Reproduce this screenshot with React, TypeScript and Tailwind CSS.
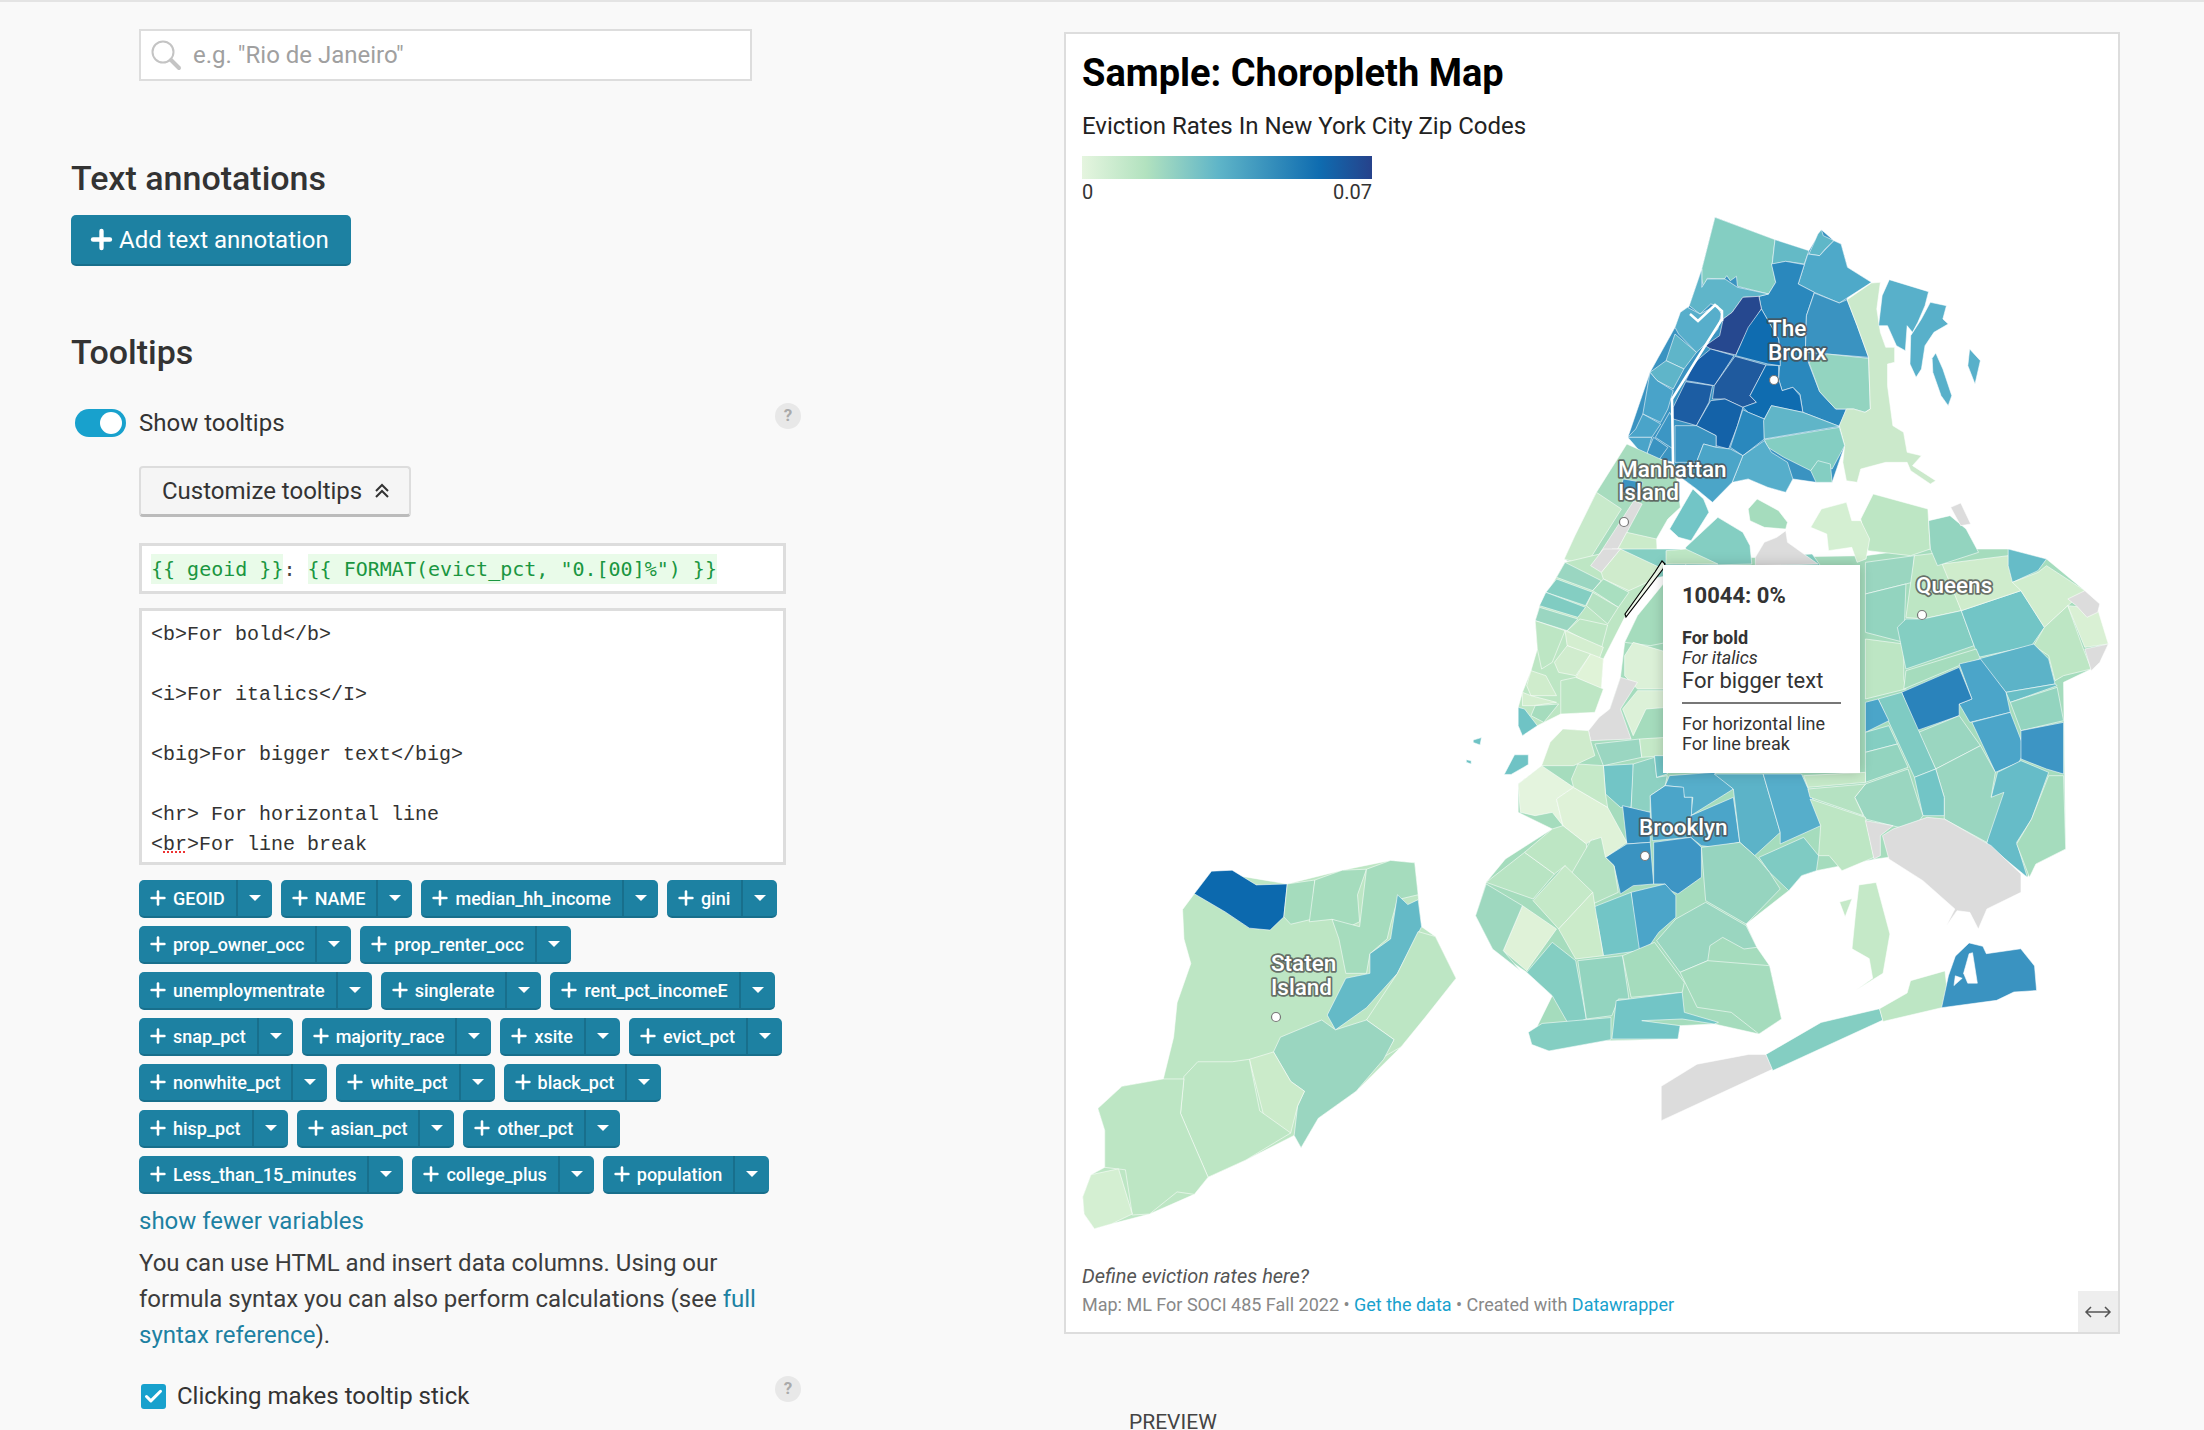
import React from "react";
import { Plus, Check } from "lucide-react";

type R = [string, string];

const top: R[] = [
  ["#3a93c1", "425,210 462,55 630,122 725,155 760,92 795,125 815,135 833,205 832,302 892,475 897,630 810,682 825,740 790,850 745,850 680,840 660,880 610,865 555,840 510,850 455,910 410,870 360,830 345,790 270,770 218,715 280,520 350,385 390,320"],
  ["#84cec2", "462,55 630,122 622,197 632,250 612,285 525,262 522,232 505,245 495,230 488,240 440,238 430,268 425,240 425,210"],
  ["#64bac6", "630,122 725,155 712,195 660,187 622,197"],
  ["#5fb7c8", "725,165 740,130 750,105 760,92 765,110 795,125 770,150 755,170"],
  ["#4ea9c9", "755,170 795,125 815,135 833,205 900,250 810,312 740,280 695,255 722,165"],
  ["#2a88bd", "620,195 660,187 712,197 695,255 740,280 718,350 715,460 725,495 755,578 800,630 830,630 810,682 708,640 700,585 680,565 650,575 640,540 645,480 640,420 592,330 585,292 612,285 632,250"],
  ["#3a93c1", "740,282 810,312 832,302 860,380 892,475 775,465 715,460 718,350"],
  ["#93d4c0", "725,490 775,465 892,478 897,630 882,640 850,630 830,630 800,630 755,578"],
  ["#cbe9cb", "832,302 900,252 925,250 915,330 925,400 940,445 965,445 965,490 945,495 945,560 960,680 990,700 1000,760 1040,770 1015,800 1080,845 1065,855 1010,815 1000,790 940,790 870,810 860,850 830,845 820,790 825,740 810,680 830,630 850,630 882,640 897,630 892,475 860,380"],
  ["#58b0ca", "950,242 1060,278 1050,320 1030,370 1015,400 1000,380 995,455 970,440 945,380 920,380 930,290"],
  ["#58b0ca", "1065,310 1110,320 1100,360 1115,375 1075,400 1050,440 1040,510 1025,535 1008,495 1010,410 1040,360"],
  ["#58b0ca", "1080,462 1100,510 1125,590 1115,620 1095,590 1072,520 1070,478"],
  ["#58b0ca", "1175,450 1205,485 1190,555 1170,500"],
  ["#5fb5c9", "425,210 425,265 440,240 490,240 525,265 612,285 585,292 540,295 510,340 485,360 470,320 450,315 420,345 390,320"],
  ["#26488f", "540,295 585,292 592,330 555,390 520,468 450,450 435,440 475,410 485,360 510,340"],
  ["#0f6cb0", "592,330 640,420 645,500 610,495 520,470 555,385"],
  ["#175ca6", "450,450 515,470 460,560 410,550 380,545 405,490"],
  ["#1f5a9e", "518,472 605,498 560,590 578,610 540,625 490,600 455,600 460,560"],
  ["#0f6cb0", "605,498 640,500 640,540 650,575 680,565 700,590 708,640 620,620 600,660 555,640 540,625 578,610 560,590"],
  ["#1c5da3", "380,548 455,560 445,610 410,680 395,675 345,660 345,625"],
  ["#1462a8", "450,605 490,600 540,625 525,680 500,750 465,740 465,710 410,680"],
  ["#2a88bd", "540,632 555,640 600,660 600,720 540,770 505,745 525,680"],
  ["#60b5c8", "620,620 708,640 810,682 600,720 598,665"],
  ["#84cec2", "600,722 810,685 825,740 790,810 750,790 730,815 655,775 610,745"],
  ["#84cec2", "730,815 750,785 785,795 790,850 745,850"],
  ["#56aecb", "600,725 620,760 665,790 680,840 660,880 610,865 555,840 510,850 540,770"],
  ["#3a93c1", "350,680 410,680 465,710 465,745 430,735 410,790 350,790"],
  ["#4ba5c8", "430,735 465,745 505,750 540,770 510,850 455,910 410,870 360,830 410,790"],
  ["#57aecb", "385,325 420,345 465,320 480,345 470,390 440,430 410,460 360,405 350,385 365,340"],
  ["#5fb5c9", "350,405 410,460 375,510 325,485"],
  ["#5fb5c9", "325,485 375,510 345,570 300,545 280,520"],
  ["#49a3c9", "280,520 300,545 345,575 330,630 310,670 260,645"],
  ["#4aa4c9", "260,645 310,675 285,715 218,715 240,690"],
  ["#3c96c4", "335,640 345,660 345,750 295,715"],
  ["#3a93c1", "290,715 330,745 300,790 270,765"],
  ["#4aa4c9", "218,715 285,715 270,770 250,755"],
  ["#a7dcbe", "215,735 350,800 365,925 330,960 298,1020 300,1060 240,1150 140,1150 40,1080 70,1010 130,880"],
  ["#c8eacb", "130,880 200,930 100,1100 40,1080 70,1010"],
  ["#3a93c1", "205,840 260,850 250,880 195,880"],
  ["#dcdcdc", "235,905 258,915 140,1150 105,1120"],
  ["#cbebca", "215,1000 298,1020 300,1060 250,1120 185,1060"],
  ["#72c5c6", "335,990 400,870 430,900 445,940 395,1025 360,1015"],
  ["#a5dcbd", "555,930 580,900 640,935 665,970 660,990 600,985 560,965"],
];

const mid: R[] = [
  ["#bde6c4", "270,40 400,0 500,60 410,205 360,330 355,420 340,490 260,495 205,530 170,560 160,475 170,430 190,365 205,300 200,215 210,170"],
  ["#a5dcbd", "60,1100 85,1000 130,930 240,840 160,790 160,705 215,650 265,540 325,545 375,480 400,385 410,280 440,200 505,100 500,30 975,20 1090,0 1310,0 1400,30 1490,125 1545,285 1505,360 1440,400 1445,900 1375,945 1355,985 1260,885 1000,930 860,965 825,980 795,1025 695,1125 720,1195 750,1250 778,1410 725,1455 620,1425 540,1430 535,1470 380,1475 190,1470 240,1340 180,1270 100,1200"],
  ["#84cec2", "380,0 470,0 540,0 560,40 565,60 510,80 470,90 395,70"],
  ["#cfebcc", "400,0 500,60 480,90 420,125 360,90 355,70"],
  ["#dcdcdc", "330,50 360,0 400,0 355,70"],
  ["#9ad6c1", "270,40 355,95 335,125 250,85"],
  ["#84cec2", "250,90 335,130 318,170 225,130"],
  ["#80ccc2", "225,130 318,175 300,205 210,170"],
  ["#9ad6c1", "210,175 300,210 275,245 200,215"],
  ["#a9dfc0", "360,90 420,130 395,175 335,125"],
  ["#b5e2c2", "335,130 395,175 370,225 320,170"],
  ["#bde6c4", "305,210 370,228 355,300 275,245"],
  ["#bde6c4", "200,215 270,245 240,340 215,360 205,300"],
  ["#d4eed0", "270,245 360,295 350,330 275,290"],
  ["#d0ecce", "245,340 275,290 330,315 295,380 255,370"],
  ["#e0f3d8", "330,315 360,330 355,420 295,385"],
  ["#cfeccc", "190,365 225,380 250,440 190,440 180,410"],
  ["#bde6c4", "260,395 295,385 360,420 340,490 260,495"],
  ["#a5dcbd", "200,470 255,465 220,520 190,500"],
  ["#d4eed0", "170,430 190,440 250,460 195,470 170,470"],
  ["#6fc3c5", "160,475 175,480 205,530 170,560 160,530"],
  ["#a5dcbd", "410,280 440,200 510,90 510,280 470,290"],
  ["#dcf1d8", "410,320 430,280 510,310 510,420 440,420 410,380"],
  ["#dcdcdc", "400,385 440,400 400,480 425,570 330,575 325,545 350,505 375,480"],
  ["#dcf1d8", "440,425 510,425 510,475 460,480 430,560 405,480"],
  ["#cfebcc", "265,540 325,545 330,575 340,620 290,650 215,650 235,580"],
  ["#9ad6c1", "340,585 445,570 450,625 360,650"],
  ["#c5e9c8", "445,570 510,565 510,620 450,625"],
  ["#72c5c6", "360,650 430,645 430,680 425,775 400,775 365,735"],
  ["#8dd1c2", "430,645 480,625 485,685 510,680 505,710 470,740 470,790 425,780"],
  ["#72c5c6", "480,620 510,620 510,675 485,685"],
  ["#56aecb", "515,680 620,670 665,720 565,800 570,745 550,745 545,715 505,710"],
  ["#3a93c1", "405,770 470,790 470,880 415,885"],
  ["#4ba5c9", "470,740 505,710 548,715 550,745 568,745 565,865 475,875"],
  ["#4ba5c9", "565,800 665,745 680,880 620,895 590,890 565,865"],
  ["#3a93c1", "365,925 415,885 470,880 478,1005 430,1010 400,1035 385,950"],
  ["#3d95c4", "478,880 565,865 590,895 590,985 535,1035 510,1020 505,1005 478,1005"],
  ["#4ba5c9", "425,1030 505,1005 530,1040 530,1105 490,1150 460,1205 440,1205"],
  ["#72c5c6", "335,1075 425,1030 445,1205 360,1220 345,1110"],
  ["#5cb3c8", "620,675 735,675 775,850 715,920 680,880 665,720"],
  ["#56aecb", "735,675 825,675 865,790 870,830 775,885 775,850"],
  ["#7fcbc3", "725,925 830,865 865,920 860,965 825,980 795,1025 750,970"],
  ["#96d4bf", "590,895 680,880 720,925 750,970 775,1020 695,1125 600,1055"],
  ["#e4f4de", "160,705 215,650 290,715 250,750 265,830 240,790 200,800 165,790"],
  ["#dff2d8", "250,750 290,715 370,775 415,880 365,925 335,870 320,885 265,830"],
  ["#c5e9c8", "285,690 300,645 360,650 365,735 370,775 290,715"],
  ["#b8e4c3", "85,1000 175,910 245,975 195,1050"],
  ["#bde6c4", "175,910 240,840 265,830 320,885 325,960 280,985 270,950 245,975"],
  ["#b5e2c2", "280,985 330,875 355,865 365,925 385,950 395,1030 335,1065"],
  ["#c5e9c8", "195,1055 270,950 335,1030 255,1140"],
  ["#cbebca", "255,1140 335,1030 345,1110 360,1220 295,1230"],
  ["#dff2d8", "125,1205 170,1070 250,1140 180,1265"],
  ["#9ed8bf", "85,1005 170,1070 125,1205 165,1265 100,1200 60,1100"],
  ["#84cec2", "180,1270 240,1180 295,1235 320,1410 280,1430 240,1340"],
  ["#93d4bf", "300,1235 405,1220 420,1350 395,1350 380,1400 320,1410"],
  ["#a5dcbd", "405,1220 480,1180 550,1300 545,1330 425,1345"],
  ["#9ad6c0", "485,1175 530,1110 600,1060 695,1130 720,1195 690,1200 640,1165 610,1190 605,1235 540,1270"],
  ["#a5dcbd", "540,1270 605,1235 750,1250 778,1410 725,1455 660,1390 580,1375"],
  ["#72c5c6", "390,1355 545,1330 550,1390 630,1420 620,1425 545,1410 450,1415 540,1430 535,1470 380,1470"],
  ["#9ad6c0", "975,40 1090,20 1085,100 975,135"],
  ["#84cec2", "775,20 850,15 875,60 775,70"],
  ["#93d4bf", "975,135 1070,105 1065,280 975,250"],
  ["#bde6c4", "975,270 1065,285 1065,390 1070,420 975,450"],
  ["#bde6c4", "1090,20 1155,10 1200,185 1110,210 1070,205"],
  ["#84cec2", "1070,210 1110,210 1200,185 1230,290 1070,360 1050,235"],
  ["#72c5c6", "1200,185 1340,125 1395,235 1365,290 1240,325"],
  ["#a5dcbd", "1070,365 1235,300 1245,330 1195,350 1065,420"],
  ["#cfeccc", "1155,45 1310,20 1340,125 1200,185"],
  ["#66bcc8", "1310,0 1400,30 1380,65 1320,100 1310,50"],
  ["#d0edce", "1400,50 1490,125 1450,170 1395,235 1340,125 1320,100 1380,70"],
  ["#bde6c4", "1395,235 1450,170 1485,295 1505,360 1440,380 1420,395 1405,320 1370,290"],
  ["#d9f0d4", "1450,170 1520,180 1545,285 1490,295"],
  ["#dcdcdc", "1450,150 1490,125 1525,165 1520,190 1495,205 1470,170"],
  ["#dcdcdc", "1490,300 1545,285 1525,340 1505,365"],
  ["#5cb3c8", "1240,330 1370,285 1405,330 1420,405 1305,430"],
  ["#4ba5c9", "1195,345 1245,330 1305,430 1315,490 1220,520 1195,465 1225,450"],
  ["#2a83bb", "1060,430 1195,355 1225,450 1195,465 1195,500 1095,545"],
  ["#6abfc6", "1305,430 1420,405 1425,410 1315,460"],
  ["#93d4bf", "1315,460 1425,415 1440,515 1340,545"],
  ["#4ba5c9", "1225,520 1315,490 1350,605 1335,640 1280,670"],
  ["#3d95c4", "1340,545 1440,520 1440,675 1400,660 1340,630"],
  ["#66bcc8", "1285,670 1340,635 1405,670 1365,810 1330,880 1355,985 1260,885 1270,745"],
  ["#a5dcbd", "1405,680 1440,680 1445,900 1375,945 1360,985 1330,885 1365,810"],
  ["#9ad6c0", "1100,550 1195,500 1245,590 1140,660"],
  ["#7fcbc3", "1005,450 1060,430 1140,660 1090,685"],
  ["#9ad6c0", "1140,660 1245,590 1280,670 1270,745 1300,730 1260,880 1160,810 1160,745"],
  ["#72c5c6", "1090,685 1140,660 1160,745 1160,800 1110,800"],
  ["#4ba5c9", "975,460 1005,450 1030,515 975,550"],
  ["#84cec2", "975,550 1030,530 1050,585 975,610"],
  ["#93d4bf", "975,610 1050,585 1075,655 975,700"],
  ["#9ad6c0", "975,705 1075,660 1110,800 1085,845 975,810 950,745"],
  ["#c5e9c8", "830,680 975,670 975,700 840,715"],
  ["#b5e2c2", "840,720 975,705 950,745 970,800 845,745"],
  ["#bde6c4", "845,750 975,805 995,925 920,965 890,920 865,920 870,830"],
  ["#dcdcdc", "975,815 1040,830 1010,860 1010,920 995,930"],
  ["#dcdcdc", "1015,860 1040,840 1120,805 1160,810 1270,890 1340,975 1340,1030 1260,1080 1240,1140 1220,1090 1190,1085 1165,1130 1185,1080 1110,995 1030,930"],
];

const top2: R[] = [
  ["#bde6c4", "870,960 905,885 1058,930 1065,1050 1010,1070 890,1055"],
  ["#d4efd2", "730,985 760,930 830,910 845,965 870,965 895,1020 885,1080 860,1090 845,1045 780,1055 775,1005"],
  ["#93d4bf", "1060,965 1120,950 1165,990 1200,1060 1085,1100 1065,1050"],
  ["#dcdcdc", "1122,925 1150,912 1178,975 1150,980"],
  ["#84cec2", "380,1045 470,955 540,1000 560,1040 565,1095 380,1100"],
  ["#bde6c4", "325,1055 380,1050 470,1095 325,1095"],
  ["#dcdcdc", "575,1075 600,1030 635,1015 660,995 665,1030 750,1095 575,1100"],
];

const low: R[] = [
  ["#bde6c4", "195,478 220,432 330,458 410,430 480,410 515,415 525,545 545,565 575,650 495,790 430,880 375,935 350,995 340,970 270,1020 215,1055 195,1090 130,1130 75,1150 50,1160 35,1130 33,1095 45,1050 65,1035 65,960 55,915 90,870 150,855 165,770 170,700 190,620 180,570 178,510"],
  ["#0c69ae", "195,478 220,432 250,430 285,460 330,458 325,525 305,552 275,548 240,515"],
  ["#a5dcbd", "330,458 370,450 365,530 335,540 325,525"],
  ["#a5dcbd", "370,450 410,430 445,428 432,480 435,535 420,545 395,530 362,535"],
  ["#a5dcbd", "445,428 480,410 515,415 520,480 490,490 480,540 475,570 450,600 445,640 415,640 405,570 395,530 435,545"],
  ["#64bac7", "490,480 505,500 520,490 525,545 490,640 445,710 400,755 388,725 415,650 450,640 450,600 480,570"],
  ["#bde6c4", "520,555 545,565 575,650 530,730 495,790 470,810 485,775 445,735 490,640"],
  ["#9ad6c0", "445,735 485,775 470,815 430,880 375,935 350,995 340,970 345,910 355,880 335,860 310,800 320,770 380,735 400,755"],
  ["#cbebca", "275,815 310,800 335,860 355,880 345,910 335,965 320,965 295,925"],
  ["#bde6c4", "180,850 200,820 250,820 275,815 290,920 335,965 270,1020 215,1055 190,975 175,925"],
  ["#bde6c4", "55,915 90,870 150,855 180,855 175,925 215,1055 195,1090 170,1085 130,1130 105,1132 95,1040 65,1035 65,960"],
  ["#d4efd2", "33,1095 45,1050 85,1038 105,1130 75,1150 50,1160 35,1130"],
  ["#6fc3c5", "645,235 660,195 680,195 680,215 655,235"],
  ["#6fc3c5", "600,165 612,160 610,175 600,170"],
  ["#6fc3c5", "590,205 597,207 597,214 590,210"],
  ["#84cec2", "680,760 700,742 800,730 800,775 710,798 685,785"],
  ["#dcdcdc", "873,870 925,825 1000,805 1025,805 1035,835 873,940"],
  ["#84cec2", "1025,805 1105,740 1190,712 1195,735 1035,838"],
  ["#bde6c4", "1190,712 1230,680 1235,655 1285,635 1290,700 1280,710 1195,738"],
  ["#3a93c1", "1280,710 1290,645 1300,605 1320,578 1340,585 1345,600 1395,590 1415,625 1418,675 1385,678 1360,695"],
  ["#ffffff", "1325,598 1332,660 1318,660 1312,640 1320,600"],
  ["#ffffff", "1300,645 1310,650 1298,665"],
  ["#c5e9c8", "1160,460 1185,455 1205,560 1195,640 1155,675 1180,650 1175,610 1150,590 1155,520"],
  ["#c5e9c8", "1132,495 1150,488 1140,525"],
];

const Regions = ({ data, t }: { data: R[]; t: string }) => (
  <g transform={t}>
    {data.map(([c, p], i) => (
      <polygon key={i} points={p} fill={c} stroke="#ffffff" strokeWidth={0.8} strokeOpacity={0.7} vectorEffect="non-scaling-stroke" />
    ))}
  </g>
);

const labels: [string, number, number][] = [
  ["The", 1768, 337],
  ["Bronx", 1768, 361],
  ["Manhattan", 1618, 478],
  ["Island", 1618, 501],
  ["Queens", 1916, 594],
  ["Brooklyn", 1639, 836],
  ["Staten", 1271, 972],
  ["Island", 1271, 996],
];
const dots: [number, number][] = [[1774, 381], [1624, 523], [1922, 616], [1645, 857], [1276, 1018]];

function NycMap() {
  return (
    <svg width={1050} height={1040} viewBox="1066 210 1050 1040" className="block">
      <Regions data={top} t="translate(1550 200) scale(0.35714 0.33333)" />
      <Regions data={mid} t="translate(1450 550) scale(0.42608 0.33333)" />
      <Regions data={top2} t="translate(1550 200) scale(0.35714 0.33333)" />
      <Regions data={low} t="translate(1060 660) scale(0.68871 0.49116)" />
      <polyline points="1722,320 1700,355 1672,400 1673,465" fill="none" stroke="#fff" strokeWidth={2.5} />
      <polyline points="1690,315 1698,322 1715,306 1722,312 1722,322" fill="none" stroke="#fff" strokeWidth={2.5} />
      <polygon points="1662,562 1665,565 1663,570 1626,618 1625,615 1655,573" fill="#eef8ea" stroke="#000" strokeWidth={1.2} />
      {dots.map(([x, y], i) => (
        <circle key={i} cx={x} cy={y} r={4.5} fill="#fff" stroke="#777" strokeWidth={1.2} />
      ))}
      {labels.map(([s, x, y], i) => (
        <text key={i} x={x} y={y} fontFamily="Roboto, sans-serif" fontSize={22.5} fontWeight={500} fill="#fff" stroke="#4a4a4a" strokeOpacity={0.75} strokeWidth={3.5} strokeLinejoin="round" paintOrder="stroke">
          {s}
        </text>
      ))}
    </svg>
  );
}

const Chip = ({ label }: { label: string }) => (
  <div className="flex h-[38px] items-stretch rounded-[5px] bg-[#1d81a2] border-b-2 border-[#186f8c] text-white text-[18px] font-medium">
    <div className="flex items-center pl-[8px] pr-[11px] border-r-2 border-[#186f8c]">
      <Plus size={22} strokeWidth={2.8} className="mr-[4px]" />
      <span>{label}</span>
    </div>
    <div className="flex w-[34px] items-center justify-center">
      <span className="border-x-[6px] border-t-[6px] border-x-transparent border-t-white" />
    </div>
  </div>
);

const rows = [
  ["GEOID", "NAME", "median_hh_income", "gini"],
  ["prop_owner_occ", "prop_renter_occ"],
  ["unemploymentrate", "singlerate", "rent_pct_incomeE"],
  ["snap_pct", "majority_race", "xsite", "evict_pct"],
  ["nonwhite_pct", "white_pct", "black_pct"],
  ["hisp_pct", "asian_pct", "other_pct"],
  ["Less_than_15_minutes", "college_plus", "population"],
];

const Help = () => (
  <span className="flex h-[26px] w-[26px] items-center justify-center rounded-full bg-[#e8e8e8] text-[17px] font-bold text-[#aaaaaa]">?</span>
);

export default function App() {
  return (
    <div className="flex h-[1430px] w-[2204px] overflow-hidden border-t-2 border-[#e4e4e4] bg-[#f9f9f9] text-[#333333] [font-family:Roboto,sans-serif]">
      <div className="w-[1064px] shrink-0 pl-[71px]">
        <div className="ml-[68px] mt-[27px] flex h-[52px] w-[613px] items-center border-2 border-[#dddddd] bg-white pl-[9px]">
          <svg width="32" height="32" viewBox="0 0 32 32" fill="none" stroke="#c4c4c4">
            <circle cx="13" cy="13" r="10.5" strokeWidth="2" />
            <path d="M21 21l8 8" strokeWidth="4" strokeLinecap="round" />
          </svg>
          <span className="ml-[11px] text-[24px] text-[#a0a0a0]">e.g. "Rio de Janeiro"</span>
        </div>

        <h3 className="mt-[77px] text-[34px] leading-[40px] font-medium text-[#333333]">Text annotations</h3>
        <button className="mt-[17px] flex h-[51px] w-[280px] items-center rounded-[5px] border-b-2 border-[#186f8c] bg-[#1d81a2] pl-[16px] text-[24px] text-white">
          <Plus size={29} strokeWidth={3.6} className="mr-[3px]" />
          Add text annotation
        </button>

        <h3 className="mt-[66px] text-[34px] leading-[40px] font-medium text-[#333333]">Tooltips</h3>

        <div className="mt-[31px] flex h-[40px] w-[730px] items-center">
          <span className="ml-[4px] flex h-[28px] w-[51px] items-center justify-end rounded-full bg-[#18a1cd] pr-[4px]">
            <span className="h-[22px] w-[22px] rounded-full bg-white" />
          </span>
          <span className="ml-[13px] text-[24px]">Show tooltips</span>
          <span className="ml-auto -mt-[14px]"><Help /></span>
        </div>

        <button className="ml-[68px] mt-[23px] flex h-[51px] w-[272px] items-center rounded-[4px] border-2 border-b-[3px] border-[#dddddd] border-b-[#bbbbbb] bg-[#f5f5f5] pl-[21px] text-[24px]">
          Customize tooltips
          <svg width="16" height="16" viewBox="0 0 16 16" fill="none" stroke="#333" strokeWidth="2" className="ml-[12px]">
            <path d="M2 8l6-6 6 6M2 14l6-6 6 6" />
          </svg>
        </button>

        <div className="ml-[68px] mt-[26px] flex h-[51px] w-[647px] items-center border-[3px] border-[#dddddd] bg-white pl-[9px] text-[20px] text-[#1a9641] [font-family:'DejaVu_Sans_Mono',monospace]">
          <span className="bg-[#e9fbe9]">{"{{ geoid }}"}</span>
          <span className="text-[#444444]">:&nbsp;</span>
          <span className="bg-[#e9fbe9]">{'{{ FORMAT(evict_pct, "0.[00]%") }}'}</span>
        </div>

        <div className="ml-[68px] mt-[14px] h-[257px] w-[647px] border-[3px] border-[#dddddd] bg-white pl-[9px] pt-[9px] text-[20px] leading-[30px] text-[#333333] [font-family:'Liberation_Mono',monospace]">
          <div>{"<b>For bold</b>"}</div>
          <div className="h-[30px]" />
          <div>{"<i>For italics</I>"}</div>
          <div className="h-[30px]" />
          <div>{"<big>For bigger text</big>"}</div>
          <div className="h-[30px]" />
          <div>{"<hr> For horizontal line"}</div>
          <div>
            {"<"}
            <span className="underline decoration-dotted decoration-[#e33]">br</span>
            {">For line break"}
          </div>
        </div>

        <div className="ml-[68px] mt-[15px] flex flex-col gap-[8px]">
          {rows.map((r, i) => (
            <div key={i} className="flex gap-[9px]">
              {r.map((c) => (
                <Chip key={c} label={c} />
              ))}
            </div>
          ))}
        </div>

        <div className="ml-[68px] mt-[9px] w-[660px] text-[24px] leading-[36px]">
          <div className="text-[#1d81a2]">show fewer variables</div>
          <p className="mt-[6px] text-[#3c3c3c]">
            You can use HTML and insert data columns. Using our formula syntax you can also perform calculations (see{" "}
            <span className="text-[#1d81a2]">full syntax reference</span>).
          </p>
        </div>

        <div className="mt-[29px] flex h-[28px] w-[730px] items-center pl-[70px]">
          <span className="flex h-[25px] w-[25px] items-center justify-center rounded-[3px] bg-[#18a1cd]">
            <Check size={21} strokeWidth={3.5} className="text-white" />
          </span>
          <span className="ml-[11px] text-[24px]">Clicking makes tooltip stick</span>
          <span className="ml-auto -mt-[14px]"><Help /></span>
        </div>
      </div>

      <div className="w-[1056px] shrink-0">
        <div className="relative mt-[30px] h-[1302px] w-[1056px] border-2 border-[#dddddd] bg-white">
          <div className="pl-[16px] pt-[14px]">
            <h1 className="text-[38px] leading-[50px] font-bold text-black">Sample: Choropleth Map</h1>
            <p className="mt-[13px] text-[24px] leading-[30px] text-[#222222]">Eviction Rates In New York City Zip Codes</p>
            <div className="mt-[15px] h-[23px] w-[290px] bg-[linear-gradient(to_right,#e5f5df_0%,#b2e2bf_22%,#5fb5c8_47%,#0f6cb0_82%,#26428b_100%)]" />
            <div className="flex w-[290px] justify-between pt-[1px] text-[20px] leading-[24px] text-[#333333]">
              <span>0</span>
              <span>0.07</span>
            </div>
          </div>
          <div className="mt-[5px]">
            <NycMap />
          </div>
          <div className="pl-[16px] mt-[13px]">
            <p className="text-[20px] leading-[28px] italic text-[#555555]">Define eviction rates here?</p>
            <p className="text-[18px] leading-[30px] text-[#888888]">
              Map: ML For SOCI 485 Fall 2022 • <span className="text-[#18a1cd]">Get the data</span> • Created with{" "}
              <span className="text-[#18a1cd]">Datawrapper</span>
            </p>
          </div>

          <div className="absolute bottom-0 right-0 flex h-[41px] w-[40px] items-center justify-center bg-[#eeeeee]">
            <svg width="28" height="14" viewBox="0 0 28 14" fill="none" stroke="#555" strokeWidth="1.5">
              <path d="M2 7h24M7 2 2 7l5 5M21 2l5 5-5 5" />
            </svg>
          </div>

          <div className="absolute left-[597px] top-[531px] h-[208px] w-[197px] bg-white px-[19px] pt-[16px] text-[#333333] shadow-[0_0_12px_rgba(0,0,0,0.2)]">
            <div className="text-[22px] leading-[30px] font-bold">10044: 0%</div>
            <div className="mt-[17px] text-[18px] leading-[20px]">
              <div className="font-bold">For bold</div>
              <div className="italic">For italics</div>
              <div className="text-[22px] leading-[26px]">For bigger text</div>
              <div className="mt-[8px] mb-[10px] h-[2px] bg-[#777777]" />
              <div>For horizontal line</div>
              <div>For line break</div>
            </div>
          </div>
        </div>
        <div className="ml-[65px] mt-[75px] text-[21px] leading-[26px] text-[#444444]">PREVIEW</div>
      </div>
    </div>
  );
}
